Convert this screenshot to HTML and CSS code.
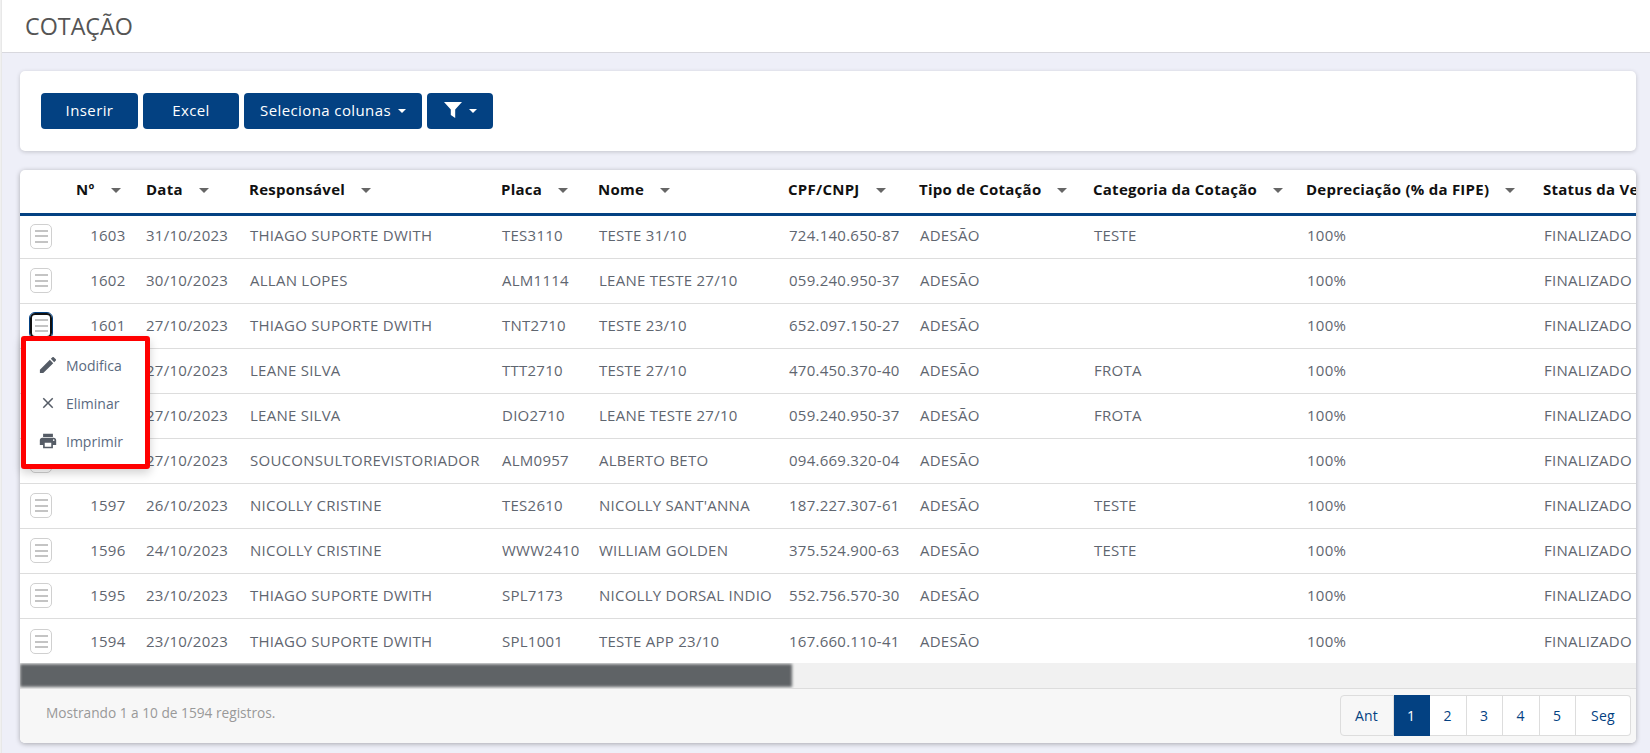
FILE: index.html
```html
<!DOCTYPE html>
<html lang="pt-BR">
<head>
<meta charset="utf-8">
<title>Cotação</title>
<link rel="stylesheet" href="styles.css">
</head>
<body>
<div class="strip"></div>
<div class="page">
  <header class="topbar"><h1>COTAÇÃO</h1></header>
  <main class="content">
    <section class="card toolbar">
      <button class="btn w-inserir">Inserir</button>
      <button class="btn w-excel">Excel</button>
      <button class="btn w-cols">Seleciona colunas<span class="caret"></span></button>
      <button class="btn w-filter"><svg class="funnel" viewBox="0 0 18 16"><path d="M0 0h18l-6.8 7.6V16l-4.4-3V7.6z"/></svg><span class="caret"></span></button>
    </section>
    <section class="card tablecard">
      <div class="tablewrap">
        <table>
          <colgroup><col class="c0"><col class="c1"><col class="c2"><col class="c3"><col class="c4"><col class="c5"><col class="c6"><col class="c7"><col class="c8"><col class="c9"><col class="c10"></colgroup>
          <thead><tr>
            <th></th>
            <th>Nº<i class="sort"></i></th>
            <th>Data<i class="sort"></i></th>
            <th>Responsável<i class="sort"></i></th>
            <th>Placa<i class="sort"></i></th>
            <th>Nome<i class="sort"></i></th>
            <th>CPF/CNPJ<i class="sort"></i></th>
            <th>Tipo de Cotação<i class="sort"></i></th>
            <th>Categoria da Cotação<i class="sort"></i></th>
            <th>Depreciação (% da FIPE)<i class="sort"></i></th>
            <th>Status da Vers</th>
          </tr></thead>
          <tbody>
            <tr><td><span class="rowbtn"><b></b><b></b><b></b></span></td><td class="num">1603</td><td>31/10/2023</td><td>THIAGO SUPORTE DWITH</td><td>TES3110</td><td>TESTE 31/10</td><td>724.140.650-87</td><td>ADESÃO</td><td>TESTE</td><td>100%</td><td>FINALIZADO</td></tr>
            <tr><td><span class="rowbtn"><b></b><b></b><b></b></span></td><td class="num">1602</td><td>30/10/2023</td><td>ALLAN LOPES</td><td>ALM1114</td><td>LEANE TESTE 27/10</td><td>059.240.950-37</td><td>ADESÃO</td><td></td><td>100%</td><td>FINALIZADO</td></tr>
            <tr><td><span class="rowbtn focus"><b></b><b></b><b></b></span></td><td class="num">1601</td><td>27/10/2023</td><td>THIAGO SUPORTE DWITH</td><td>TNT2710</td><td>TESTE 23/10</td><td>652.097.150-27</td><td>ADESÃO</td><td></td><td>100%</td><td>FINALIZADO</td></tr>
            <tr><td><span class="rowbtn"><b></b><b></b><b></b></span></td><td class="num">1600</td><td>27/10/2023</td><td>LEANE SILVA</td><td>TTT2710</td><td>TESTE 27/10</td><td>470.450.370-40</td><td>ADESÃO</td><td>FROTA</td><td>100%</td><td>FINALIZADO</td></tr>
            <tr><td><span class="rowbtn"><b></b><b></b><b></b></span></td><td class="num">1599</td><td>27/10/2023</td><td>LEANE SILVA</td><td>DIO2710</td><td>LEANE TESTE 27/10</td><td>059.240.950-37</td><td>ADESÃO</td><td>FROTA</td><td>100%</td><td>FINALIZADO</td></tr>
            <tr><td><span class="rowbtn"><b></b><b></b><b></b></span></td><td class="num">1598</td><td>27/10/2023</td><td>SOUCONSULTOREVISTORIADOR</td><td>ALM0957</td><td>ALBERTO BETO</td><td>094.669.320-04</td><td>ADESÃO</td><td></td><td>100%</td><td>FINALIZADO</td></tr>
            <tr><td><span class="rowbtn"><b></b><b></b><b></b></span></td><td class="num">1597</td><td>26/10/2023</td><td>NICOLLY CRISTINE</td><td>TES2610</td><td>NICOLLY SANT'ANNA</td><td>187.227.307-61</td><td>ADESÃO</td><td>TESTE</td><td>100%</td><td>FINALIZADO</td></tr>
            <tr><td><span class="rowbtn"><b></b><b></b><b></b></span></td><td class="num">1596</td><td>24/10/2023</td><td>NICOLLY CRISTINE</td><td>WWW2410</td><td>WILLIAM GOLDEN</td><td>375.524.900-63</td><td>ADESÃO</td><td>TESTE</td><td>100%</td><td>FINALIZADO</td></tr>
            <tr><td><span class="rowbtn"><b></b><b></b><b></b></span></td><td class="num">1595</td><td>23/10/2023</td><td>THIAGO SUPORTE DWITH</td><td>SPL7173</td><td>NICOLLY DORSAL INDIO</td><td>552.756.570-30</td><td>ADESÃO</td><td></td><td>100%</td><td>FINALIZADO</td></tr>
            <tr><td><span class="rowbtn"><b></b><b></b><b></b></span></td><td class="num">1594</td><td>23/10/2023</td><td>THIAGO SUPORTE DWITH</td><td>SPL1001</td><td>TESTE APP 23/10</td><td>167.660.110-41</td><td>ADESÃO</td><td></td><td>100%</td><td>FINALIZADO</td></tr>
          </tbody>
        </table>
      </div>
      <div class="scrolltrack"><div class="scrollthumb"></div></div>
      <footer class="tablefoot">
        <span class="info">Mostrando 1 a 10 de 1594 registros.</span>
        <nav class="pager">
          <a class="pg prev">Ant</a><a class="pg active">1</a><a class="pg">2</a><a class="pg">3</a><a class="pg">4</a><a class="pg">5</a><a class="pg next">Seg</a>
        </nav>
      </footer>
      <div class="menu">
        <a class="menuitem"><svg viewBox="2 2 20 20"><path d="M3 17.25V21h3.75L17.81 9.94l-3.75-3.75L3 17.25zM20.71 7.04c.39-.39.39-1.02 0-1.41l-2.34-2.34c-.39-.39-1.02-.39-1.41 0l-1.83 1.83 3.75 3.75 1.83-1.83z"/></svg>Modifica</a>
        <a class="menuitem"><svg viewBox="0 0 24 24"><path d="M19 6.41L17.59 5 12 10.59 6.41 5 5 6.41 10.59 12 5 17.59 6.41 19 12 13.41 17.59 19 19 17.59 13.41 12z"/></svg>Eliminar</a>
        <a class="menuitem"><svg viewBox="1 1 22 22"><path d="M19 8H5c-1.66 0-3 1.34-3 3v6h4v4h12v-4h4v-6c0-1.66-1.34-3-3-3zm-3 11H8v-5h8v5zm3-7c-.55 0-1-.45-1-1s.45-1 1-1 1 .45 1 1-.45 1-1 1zm-1-9H6v4h12V3z"/></svg>Imprimir</a>
      </div>
    </section>
  </main>
</div>
</body>
</html>
```
FILE: styles.css
```css
* { box-sizing: border-box; }
html, body { height: 100%; }
body {
  margin: 0;
  display: flex;
  height: 753px;
  overflow: hidden;
  font-family: "Open Sans", "Liberation Sans", sans-serif;
  font-size: 15px;
  letter-spacing: .25px;
  color: #5f6670;
  background: #eeeff8;
}
.strip { width: 2px; flex: none; background: linear-gradient(to right, #f4f4f4, #e4e4e4); }
.page { flex: 1; min-width: 0; display: flex; flex-direction: column; }
.topbar {
  height: 53px;
  background: #fff;
  border-bottom: 1px solid #d8d8de;
  padding-left: 23px;
  display: flex;
  align-items: center;
  flex: none;
}
.topbar h1 { margin: 0 0 1px; font-size: 23.3px; font-weight: 400; letter-spacing: 0; color: #555; }
.content { padding: 18px 14px 0 18px; display: flex; flex-direction: column; gap: 19px; }
.card {
  background: #fff;
  border-radius: 5px;
  box-shadow: 0 1px 4px rgba(0,0,0,.18);
}
.toolbar {
  height: 80px;
  padding: 22px 21px;
  display: flex;
  gap: 5px;
}
.btn {
  height: 36px;
  border: 0;
  border-radius: 4px;
  background: #034182;
  color: #fff;
  font: inherit;
  font-size: 15px;
  letter-spacing: .4px;
  padding: 0 0 2px;
  display: inline-flex;
  align-items: center;
  justify-content: center;
}
.w-inserir { width: 97px; }
.w-excel { width: 96px; }
.w-cols { width: 178px; }
.w-filter { width: 66px; }
.caret {
  width: 0; height: 0;
  margin: 2px 0 0 7px;
  border-left: 4px solid transparent;
  border-right: 4px solid transparent;
  border-top: 4px solid #fff;
}
.funnel { width: 18px; height: 16px; fill: #fff; }
.tablecard {
  position: relative;
  height: 573px;
  display: flex;
  flex-direction: column;
  box-shadow: 0 1px 5px rgba(0,0,0,.3);
}
.tablewrap { height: 493px; overflow: hidden; flex: none; border-radius: 5px 5px 0 0; }
table { border-collapse: collapse; table-layout: fixed; width: 1714px; }
.c0 { width: 46px; } .c1 { width: 70px; } .c2 { width: 104px; } .c3 { width: 252px; } .c4 { width: 97px; }
.c5 { width: 190px; } .c6 { width: 131px; } .c7 { width: 174px; } .c8 { width: 213px; } .c9 { width: 237px; } .c10 { width: 200px; }
th {
  height: 44px;
  padding: 0 0 5px 10px;
  text-align: left;
  font-size: 15px;
  font-weight: 700;
  color: #111;
  white-space: nowrap;
  overflow: hidden;
  letter-spacing: .25px;
  border-bottom: 3px solid #034182;
}
th:nth-child(n+4) { padding-left: 9px; }
.sort {
  display: inline-block;
  margin-left: 16px;
  vertical-align: 2px;
  border-left: 5px solid transparent;
  border-right: 5px solid transparent;
  border-top: 5px solid #666;
}
td {
  height: 45px;
  padding: 0 0 2px 10px;
  white-space: nowrap;
  overflow: hidden;
  border-bottom: 1px solid #ddd;
}
tbody tr:first-child td { height: 44px; padding-bottom: 3px; }
tbody tr:last-child td { border-bottom: 0; padding-bottom: 0; }
td.num { text-align: right; padding-right: 10.5px; padding-left: 0; }
.rowbtn {
  width: 22px;
  height: 25px;
  display: flex;
  flex-direction: column;
  justify-content: center;
  gap: 3.5px;
  padding: 0 3.5px;
  border: 1px solid #d0d0d0;
  border-radius: 5px;
  margin-top: 2px;
}
.rowbtn b { height: 2px; background: #c4c4c4; display: block; }
.rowbtn.focus { border: 2px solid #111; outline: 1px solid #034182; padding: 0 2.5px; }
.scrolltrack { height: 25px; background: #f1f1f1; flex: none; overflow: hidden; }
.scrollthumb { width: 772px; height: 23px; margin-top: 1px; background: #5f6366; filter: blur(1.5px); }
.tablefoot {
  height: 55px;
  background: #f7f7f7;
  border-top: 1px solid #ddd;
  border-radius: 0 0 5px 5px;
  padding: 6px 5px 0 26px;
  display: flex;
  justify-content: space-between;
}
.info { color: #999; font-size: 13.7px; letter-spacing: 0; line-height: 36px; }
.pager { display: flex; height: 41px; }
.pg {
  width: 36.5px;
  display: flex;
  align-items: center;
  justify-content: center;
  background: #fff;
  border: 1px solid #ddd;
  border-left: 0;
  color: #034182;
  font-size: 14px;
}
.pg.active { background: #034182; color: #fff; border-color: #034182; }
.pg.prev { width: 54px; background: #f7f7f7; border-left: 1px solid #ddd; border-radius: 4px 0 0 4px; }
.pg.next { width: 55px; border-radius: 0 4px 4px 0; }
.menu {
  position: absolute;
  left: 1px;
  top: 166px;
  width: 129px;
  height: 133px;
  background: #fff;
  border: 5px solid #f00;
  border-radius: 3px;
  box-shadow: 0 4px 10px rgba(0,0,0,.18);
  padding: 5px 0 0 11px;
  display: flex;
  flex-direction: column;
}
.menuitem {
  height: 38px;
  display: flex;
  align-items: center;
  gap: 9px;
  font-size: 14px;
  letter-spacing: 0;
  color: #5a6a80;
}
.menuitem svg { width: 18px; height: 18px; fill: #555c66; flex: none; margin-left: 2px; }
```
